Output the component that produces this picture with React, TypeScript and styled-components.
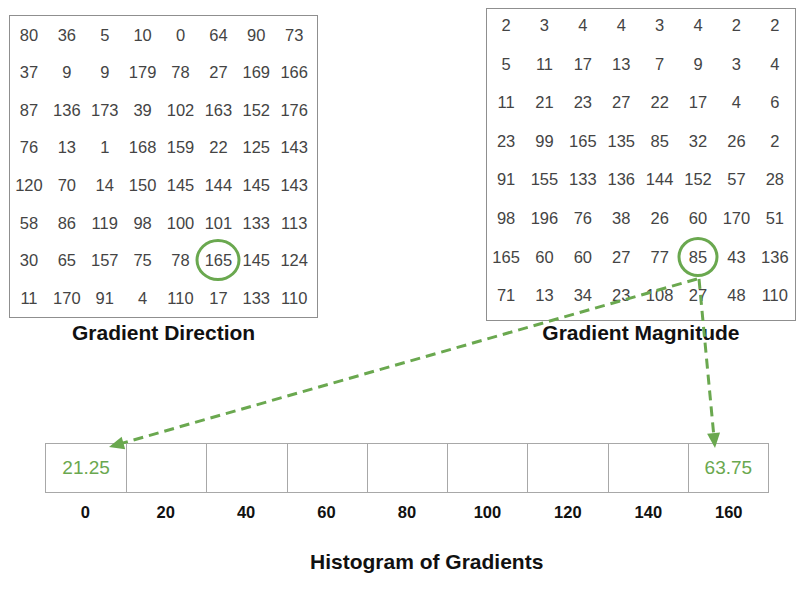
import React from "react";
import styled, { createGlobalStyle } from "styled-components";

const GlobalStyle = createGlobalStyle`
    html, body {
        margin: 0;
        padding: 0;
        background: #ffffff;
    }
    body {
        font-family: "Liberation Sans", Arial, sans-serif;
    }
`;

const GREEN = "#6aa84f";

const Page = styled.div`
    position: relative;
    width: 801px;
    height: 591px;
    overflow: hidden;
    background: #ffffff;
`;

const TopRow = styled.div`
    display: flex;
    flex-direction: row;
    justify-content: space-between;
    align-items: flex-start;
    padding: 0 5px 0 9px;
`;

const Panel = styled.div<{ $top: number }>`
    display: flex;
    flex-direction: column;
    align-items: center;
    padding-top: ${(p) => p.$top}px;
`;

const MatrixBox = styled.div<{ $col: number; $row: number; $padRight: number; $padBottom: number }>`
    display: grid;
    grid-template-columns: repeat(8, ${(p) => p.$col}px);
    grid-template-rows: repeat(8, ${(p) => p.$row}px);
    padding: 0 ${(p) => p.$padRight}px ${(p) => p.$padBottom}px 0;
    border: 1px solid #8f8f8f;
    background: #ffffff;
`;

const MatrixCell = styled.div<{ $lift: number }>`
    display: flex;
    align-items: center;
    justify-content: center;
    padding-bottom: ${(p) => p.$lift}px;
    font-size: 16.5px;
    color: #444444;
`;

const Num = styled.span<{ $ring?: { w: number; h: number } }>`
    position: relative;
    display: inline-block;
    line-height: 1;

    ${(p) =>
        p.$ring &&
        `
        &::after {
            content: "";
            position: absolute;
            left: 50%;
            top: 50%;
            width: ${p.$ring.w}px;
            height: ${p.$ring.h}px;
            box-sizing: border-box;
            transform: translate(-50%, -50%);
            border: 3px solid ${GREEN};
            border-radius: 50%;
        }
    `}
`;

const PanelTitle = styled.div<{ $gap: number }>`
    margin-top: ${(p) => p.$gap}px;
    font-size: 21px;
    line-height: 24px;
    font-weight: bold;
    color: #111111;
`;

const HistSection = styled.div`
    display: flex;
    flex-direction: column;
    margin-top: 98px;
    padding-left: 45px;
`;

const HistBox = styled.div`
    display: grid;
    grid-template-columns: repeat(9, 1fr);
    width: 724px;
    height: 50px;
    box-sizing: border-box;
    border: 1px solid #a8a8a8;
`;

const Bin = styled.div<{ $first: boolean }>`
    display: flex;
    align-items: center;
    justify-content: center;
    border-left: ${(p) => (p.$first ? "none" : "1px solid #a8a8a8")};
    font-size: 19px;
    color: ${GREEN};
`;

const BinLabels = styled.div`
    display: grid;
    grid-template-columns: repeat(9, 1fr);
    width: 724px;
    margin-top: 9px;
`;

const BinLabel = styled.div`
    text-align: center;
    font-size: 16.5px;
    line-height: 20px;
    font-weight: bold;
    color: #111111;
`;

const HistTitle = styled.div`
    margin-top: 28px;
    margin-left: 265px;
    font-size: 21px;
    line-height: 24px;
    font-weight: bold;
    color: #111111;
`;

const Overlay = styled.svg`
    position: absolute;
    left: 0;
    top: 0;
    pointer-events: none;
`;

const direction = [
    [80, 36, 5, 10, 0, 64, 90, 73],
    [37, 9, 9, 179, 78, 27, 169, 166],
    [87, 136, 173, 39, 102, 163, 152, 176],
    [76, 13, 1, 168, 159, 22, 125, 143],
    [120, 70, 14, 150, 145, 144, 145, 143],
    [58, 86, 119, 98, 100, 101, 133, 113],
    [30, 65, 157, 75, 78, 165, 145, 124],
    [11, 170, 91, 4, 110, 17, 133, 110],
];

const magnitude = [
    [2, 3, 4, 4, 3, 4, 2, 2],
    [5, 11, 17, 13, 7, 9, 3, 4],
    [11, 21, 23, 27, 22, 17, 4, 6],
    [23, 99, 165, 135, 85, 32, 26, 2],
    [91, 155, 133, 136, 144, 152, 57, 28],
    [98, 196, 76, 38, 26, 60, 170, 51],
    [165, 60, 60, 27, 77, 85, 43, 136],
    [71, 13, 34, 23, 108, 27, 48, 110],
];

const bins = ["21.25", "", "", "", "", "", "", "", "63.75"];
const labels = [0, 20, 40, 60, 80, 100, 120, 140, 160];

type MatrixProps = {
    values: number[][];
    col: number;
    row: number;
    padRight: number;
    padBottom: number;
    lift: number;
    ring: { w: number; h: number };
};

function Matrix({ values, col, row, padRight, padBottom, lift, ring }: MatrixProps): JSX.Element {
    return (
        <MatrixBox $col={col} $row={row} $padRight={padRight} $padBottom={padBottom}>
            {values.map((line, r) =>
                line.map((v, c) => (
                    <MatrixCell key={`${r}-${c}`} $lift={lift}>
                        <Num $ring={r === 6 && c === 5 ? ring : undefined}>{v}</Num>
                    </MatrixCell>
                ))
            )}
        </MatrixBox>
    );
}

function Arrow({ x1, y1, x2, y2 }: { x1: number; y1: number; x2: number; y2: number }) {
    const len = Math.hypot(x2 - x1, y2 - y1);
    const ux = (x2 - x1) / len;
    const uy = (y2 - y1) / len;
    const head = 15;
    const half = 6.5;
    const bx = x2 - ux * head;
    const by = y2 - uy * head;
    const pts = `${x2},${y2} ${bx - uy * half},${by + ux * half} ${bx + uy * half},${by - ux * half}`;

    return (
        <g>
            <line
                x1={x1}
                y1={y1}
                x2={bx + ux * 2}
                y2={by + uy * 2}
                stroke={GREEN}
                strokeWidth={3}
                strokeDasharray="10 6"
            />
            <polygon points={pts} fill={GREEN} />
        </g>
    );
}

export default function App(): JSX.Element {
    return (
        <Page>
            <GlobalStyle />
            <TopRow>
                <Panel $top={15}>
                    <Matrix
                        values={direction}
                        col={37.9}
                        row={37.6}
                        padRight={4}
                        padBottom={0}
                        lift={0}
                        ring={{ w: 45, h: 42 }}
                    />
                    <PanelTitle $gap={3}>Gradient Direction</PanelTitle>
                </Panel>
                <Panel $top={8}>
                    <Matrix
                        values={magnitude}
                        col={38.4}
                        row={38.6}
                        padRight={1}
                        padBottom={2}
                        lift={6}
                        ring={{ w: 41, h: 40 }}
                    />
                    <PanelTitle $gap={0}>Gradient Magnitude</PanelTitle>
                </Panel>
            </TopRow>

            <HistSection>
                <HistBox>
                    {bins.map((b, i) => (
                        <Bin key={i} $first={i === 0}>
                            {b}
                        </Bin>
                    ))}
                </HistBox>
                <BinLabels>
                    {labels.map((l) => (
                        <BinLabel key={l}>{l}</BinLabel>
                    ))}
                </BinLabels>
                <HistTitle>Histogram of Gradients</HistTitle>
            </HistSection>

            <Overlay width={801} height={591} viewBox="0 0 801 591">
                <Arrow x1={697} y1={279} x2={109} y2={447} />
                <Arrow x1={699} y1={279} x2={715} y2={448} />
            </Overlay>
        </Page>
    );
}
